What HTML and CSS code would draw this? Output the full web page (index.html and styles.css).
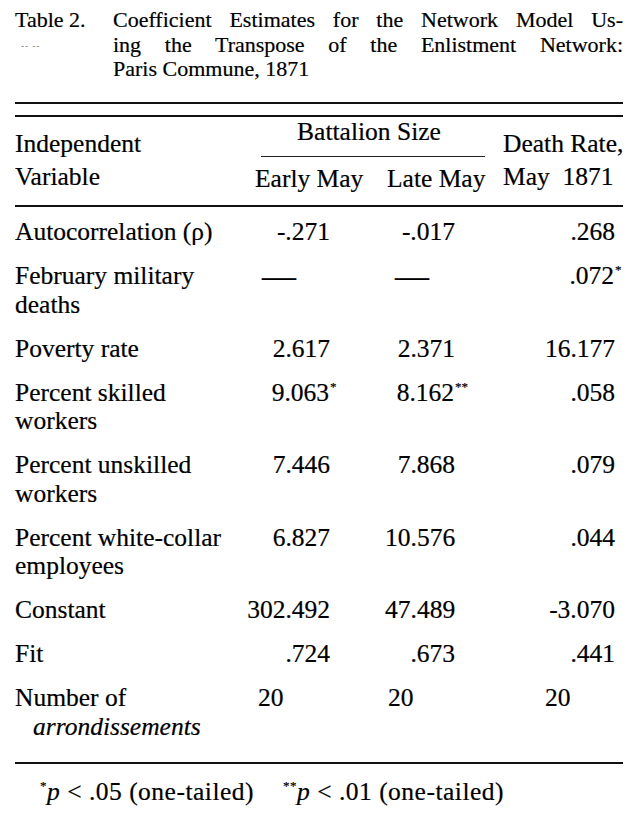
FILE: index.html
```html
<!DOCTYPE html>
<html lang="en">
<head>
<meta charset="utf-8">
<title>Table 2</title>
<link rel="stylesheet" href="styles.css">
</head>
<body>
<div class="page">
  <div class="caption">
    <div class="cap-label">
      <div class="cap-line">Table 2.</div>
      <div class="cap-line"><span class="artifact">-- --</span></div>
    </div>
    <div class="cap-text">
      <div class="cap-line just">Coefficient Estimates for the Network Model Us-</div>
      <div class="cap-line just">ing the Transpose of the Enlistment Network:</div>
      <div class="cap-line">Paris Commune, 1871</div>
    </div>
  </div>

  <div class="double-rule"></div>

  <div class="head">
    <div class="h-left">Independent<br>Variable</div>
    <div class="h-mid">
      <div class="h-span">Battalion Size</div>
      <div class="h-subs">
        <div class="h-sub early">Early May</div>
        <div class="h-sub late">Late May</div>
      </div>
    </div>
    <div class="h-right">Death Rate,<br>May&nbsp; 1871</div>
  </div>

  <div class="rule"></div>

  <div class="body">
    <div class="row">
      <div class="lab">Autocorrelation (ρ)</div>
      <div class="num c2">-.271</div>
      <div class="num c3">-.017</div>
      <div class="num c4">.268</div>
    </div>
    <div class="row">
      <div class="lab">February military<br>deaths</div>
      <div class="dash c2">—</div>
      <div class="dash c3">—</div>
      <div class="num c4">.072<sup class="sig">*</sup></div>
    </div>
    <div class="row">
      <div class="lab">Poverty rate</div>
      <div class="num c2">2.617</div>
      <div class="num c3">2.371</div>
      <div class="num c4">16.177</div>
    </div>
    <div class="row">
      <div class="lab">Percent skilled<br>workers</div>
      <div class="num c2">9.063<sup class="sig">*</sup></div>
      <div class="num c3">8.162<sup class="sig">**</sup></div>
      <div class="num c4">.058</div>
    </div>
    <div class="row">
      <div class="lab">Percent unskilled<br>workers</div>
      <div class="num c2">7.446</div>
      <div class="num c3">7.868</div>
      <div class="num c4">.079</div>
    </div>
    <div class="row">
      <div class="lab">Percent white-collar<br>employees</div>
      <div class="num c2">6.827</div>
      <div class="num c3">10.576</div>
      <div class="num c4">.044</div>
    </div>
    <div class="row">
      <div class="lab">Constant</div>
      <div class="num c2">302.492</div>
      <div class="num c3">47.489</div>
      <div class="num c4">-3.070</div>
    </div>
    <div class="row">
      <div class="lab">Fit</div>
      <div class="num c2">.724</div>
      <div class="num c3">.673</div>
      <div class="num c4">.441</div>
    </div>
    <div class="row">
      <div class="lab">Number of<br><em class="indent">arrondissements</em></div>
      <div class="cnt c2">20</div>
      <div class="cnt c3">20</div>
      <div class="cnt c4">20</div>
    </div>
  </div>

  <div class="rule bottom"></div>

  <div class="notes">
    <span class="note"><sup class="fn">*</sup><em>p</em> &lt; .05 (one-tailed)</span>
    <span class="note"><sup class="fn">**</sup><em>p</em> &lt; .01 (one-tailed)</span>
  </div>
</div>
</body>
</html>
```

FILE: styles.css
```css
html, body {
  margin: 0;
  padding: 0;
  background: #ffffff;
}

.page {
  width: 608px;
  margin-left: 15px;
  padding-top: 8px;
  font-family: "Liberation Serif", "Times New Roman", serif;
  font-size: 25.5px;
  color: #000;
  -webkit-text-stroke: 0.2px #000;
}

/* caption */
.caption {
  display: flex;
  font-size: 22px;
}
.cap-label {
  width: 98px;
  flex: none;
}
.cap-text {
  flex: 1;
  min-width: 0;
}
.cap-line {
  line-height: 24.5px;
  height: 24.5px;
  white-space: nowrap;
}
.cap-line.just {
  text-align: justify;
  text-align-last: justify;
  white-space: normal;
}
.artifact {
  font-size: 9px;
  color: #666;
  letter-spacing: 1px;
  padding-left: 6px;
  vertical-align: middle;
  -webkit-text-stroke: 0;
}

/* rules */
.double-rule {
  margin-top: 20.5px;
  height: 11px;
  border-top: 2px solid #111;
  border-bottom: 2px solid #111;
}
.rule {
  height: 0;
  border-top: 2px solid #111;
}
.rule.bottom {
  margin-top: 21px;
}

/* header */
.head {
  display: grid;
  grid-template-columns: 240px 248px 120px;
  padding-top: 1px;
  padding-bottom: 12px;
}
.h-left, .h-right {
  align-self: end;
  line-height: 33px;
  white-space: nowrap;
}
.h-mid {
  display: flex;
  flex-direction: column;
}
.h-span {
  line-height: 28px;
  text-align: center;
  margin: 0 18px 8px 6px;
  padding-bottom: 10px;
  padding-right: 8px;
  border-bottom: 1.5px solid #222;
}
.h-subs {
  display: flex;
  line-height: 28px;
  white-space: nowrap;
}
.h-sub.early {
  width: 132px;
}

/* body rows */
.body {
  padding-top: 11px;
  display: flex;
  flex-direction: column;
  gap: 15.5px;
}
.row {
  display: grid;
  grid-template-columns: 230px 140px 118px 120px;
  line-height: 28.5px;
}
.lab {
  white-space: nowrap;
}
.indent {
  padding-left: 18px;
}
.num {
  text-align: right;
  white-space: nowrap;
}
.num.c2 { padding-right: 55px; }
.num.c3 { padding-right: 48px; }
.num.c4 { padding-right: 8px; }

.dash {
  font-size: 34px;
  line-height: 28.5px;
  height: 28.5px;
}
.dash.c2 { padding-left: 17px; }
.dash.c3 { padding-left: 10px; }

.cnt.c2 { padding-left: 13px; }
.cnt.c3 { padding-left: 3px; }
.cnt.c4 { padding-left: 42px; }

.sig {
  font-size: 13px;
  line-height: 0;
  vertical-align: 10px;
  display: inline-block;
  width: 0;
  padding-left: 1px;
}

/* footnotes */
.notes {
  display: flex;
  padding-top: 14px;
  padding-left: 25px;
  line-height: 28px;
  white-space: nowrap;
  letter-spacing: 0.5px;
}
.note:first-child {
  width: 243px;
}
.fn {
  font-size: 13px;
  line-height: 0;
  vertical-align: 10px;
}
```
